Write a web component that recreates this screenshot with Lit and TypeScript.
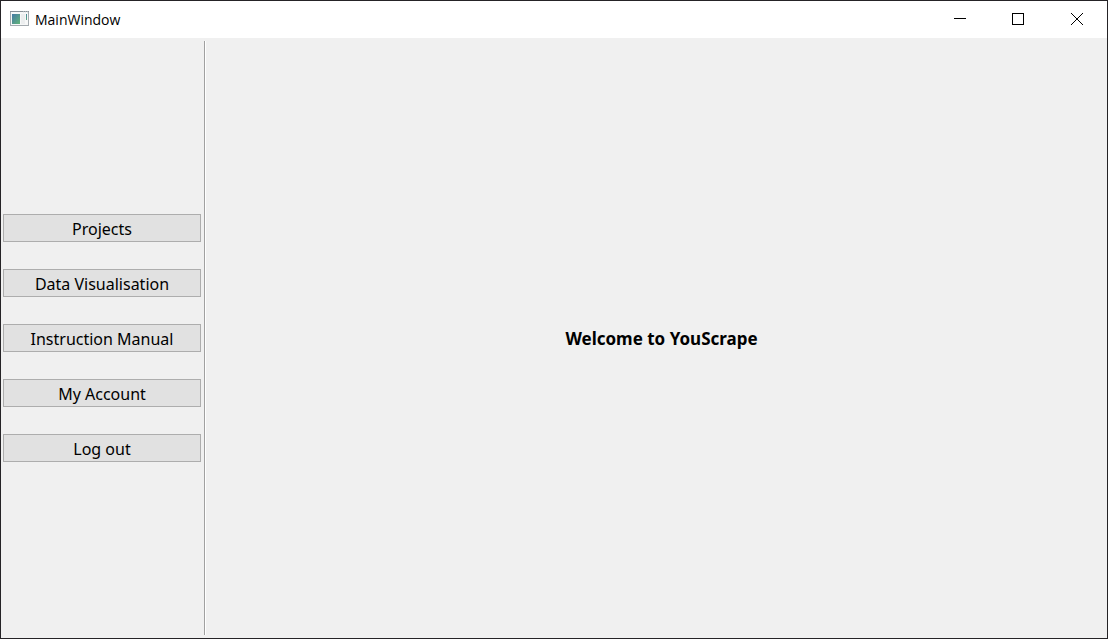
import { LitElement, html, css } from "lit";
import { customElement, state } from "lit/decorators.js";

@customElement("title-bar")
class TitleBar extends LitElement {
  static styles = css`
    :host {
      display: flex;
      align-items: center;
      box-sizing: border-box;
      height: 37px;
      padding-bottom: 1px;
      background: #fff;
      color: #000;
    }
    .app-icon {
      display: block;
      margin: 0 0 1px 9px;
    }
    .title {
      flex: 1;
      margin: 0;
      padding: 2px 0 0 6px;
      font: 400 14px/20px "Open Sans", "Noto Sans", sans-serif;
    }
    .control {
      display: grid;
      place-items: center;
      width: 58px;
      height: 100%;
      padding: 0;
      border: 0;
      background: transparent;
      color: inherit;
    }
    .control:last-child {
      width: 60px;
    }
    .control:hover {
      background: #e5e5e5;
    }
  `;

  render() {
    return html`
      <svg class="app-icon" width="19" height="15" viewBox="0 0 19 15" aria-hidden="true">
        <defs>
          <linearGradient id="pane" x1="0" y1="0" x2="1" y2="1">
            <stop offset="0" stop-color="#4579a5" />
            <stop offset="1" stop-color="#62b579" />
          </linearGradient>
        </defs>
        <rect x="0.5" y="0.5" width="18" height="14" fill="#f7f8f8" stroke="#a4abb0" />
        <path d="M0 .5h19" stroke="#899198" />
        <path d="M13 1h1m1 0h1m1 0h1" stroke="#d5dade" />
        <rect x="2" y="3" width="8" height="10" fill="url(#pane)" />
        <rect x="11" y="3" width="4" height="10" fill="#eceeef" />
        <rect x="16" y="3" width="1" height="6" fill="url(#pane)" />
      </svg>
      <h1 class="title">MainWindow</h1>
      <button class="control" aria-label="Minimize">
        <svg width="12" height="12" viewBox="0 0 12 12" fill="none" stroke="currentColor">
          <path d="M0 5.5h12" />
        </svg>
      </button>
      <button class="control" aria-label="Maximize">
        <svg width="12" height="12" viewBox="0 0 12 12" fill="none" stroke="currentColor">
          <rect x="0.5" y="0.5" width="11" height="11" />
        </svg>
      </button>
      <button class="control" aria-label="Close">
        <svg width="12" height="12" viewBox="0 0 12 12" fill="none" stroke="currentColor">
          <path d="M0 0l12 12M12 0L0 12" />
        </svg>
      </button>
    `;
  }
}

@customElement("app-root")
class AppRoot extends LitElement {
  static styles = css`
    :host {
      display: flex;
      flex-direction: column;
      box-sizing: border-box;
      min-height: 100vh;
      border: 1px solid #252326;
      background: #f0f0f0;
      color: #000;
      font: 400 16px/20px "Noto Sans", "Open Sans", sans-serif;
    }
    .body {
      flex: 1;
      display: flex;
      padding: 3px 2px;
    }
    .menu {
      display: flex;
      flex-direction: column;
      justify-content: center;
      gap: 27px;
      width: 198px;
    }
    .item {
      height: 28px;
      padding: 2px 0 0;
      border: 1px solid #adadad;
      background: #e1e1e1;
      color: inherit;
      font: inherit;
    }
    .item:hover {
      border-color: #0078d7;
      background: #e5f1fb;
    }
    .divider {
      width: 1px;
      margin-left: 3px;
      border-right: 1px solid #fff;
      background: #a0a0a0;
    }
    .page {
      flex: 1;
      display: grid;
      place-items: center;
      padding: 2px 0 0 12px;
    }
    .welcome {
      margin: 0;
      font-size: 17px;
      font-weight: 700;
      line-height: 20px;
    }
  `;

  @state() private items = [
    "Projects",
    "Data Visualisation",
    "Instruction Manual",
    "My Account",
    "Log out",
  ];

  render() {
    return html`
      <title-bar></title-bar>
      <div class="body">
        <nav class="menu">
          ${this.items.map((item) => html`<button class="item">${item}</button>`)}
        </nav>
        <div class="divider"></div>
        <main class="page">
          <h2 class="welcome">Welcome to YouScrape</h2>
        </main>
      </div>
    `;
  }
}
